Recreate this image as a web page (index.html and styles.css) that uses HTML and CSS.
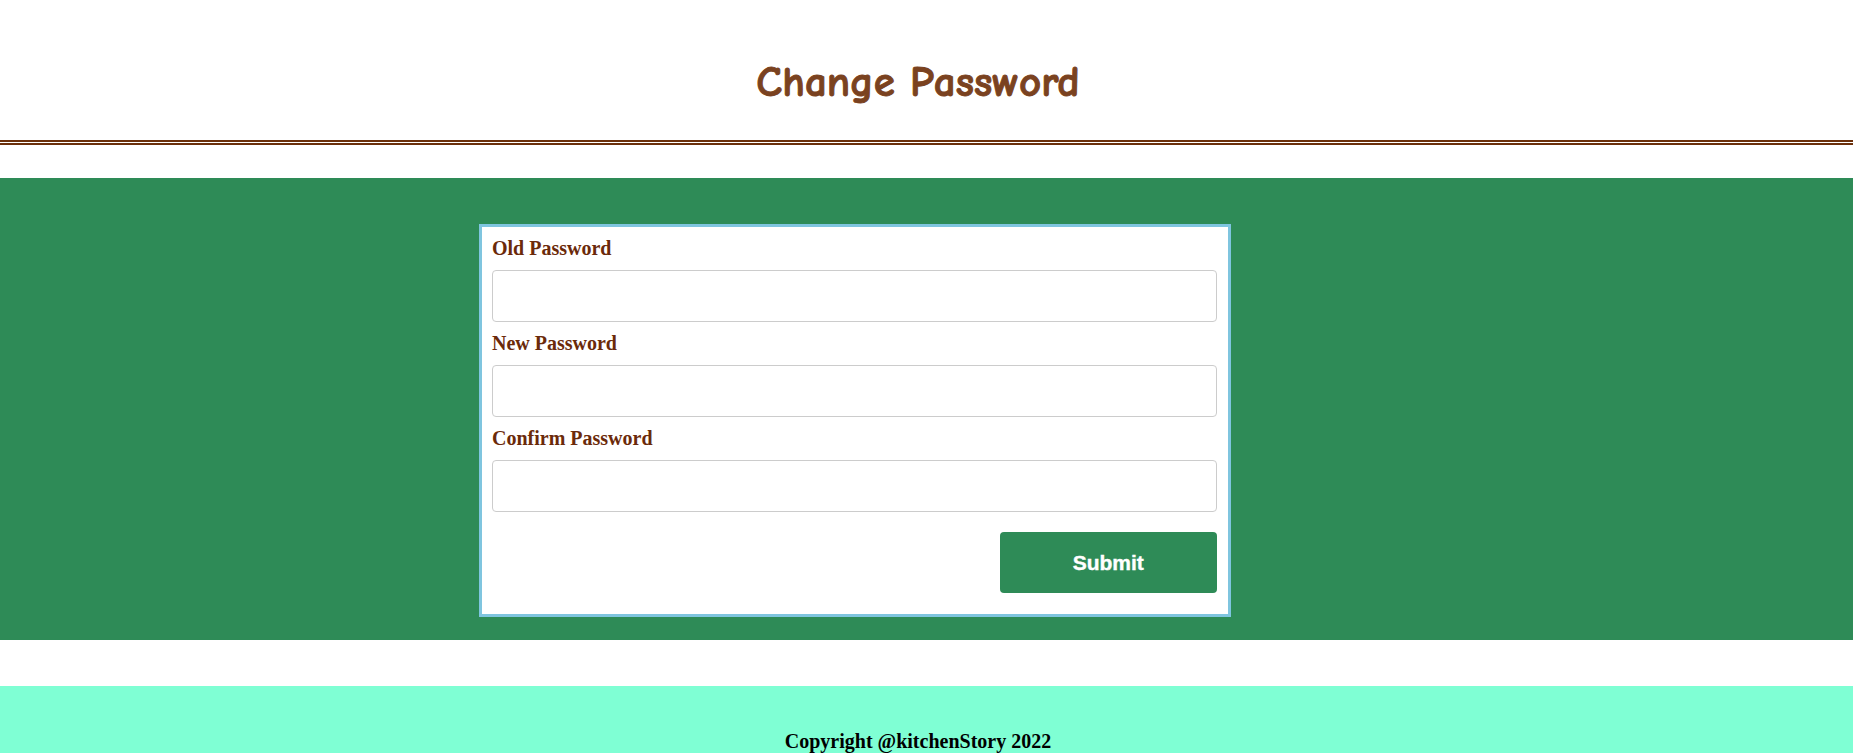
FILE: index.html
```html
<!DOCTYPE html>
<html lang="en">
<head>
<meta charset="utf-8">
<title>Change Password</title>
<link rel="stylesheet" href="styles.css">
</head>
<body>
<header class="page-header">
  <h1 class="page-title">Change Password</h1>
</header>
<main class="band">
  <form class="pw-form">
    <label class="field-label" for="old">Old Password</label>
    <input class="field-input" id="old" type="password">
    <label class="field-label" for="new">New Password</label>
    <input class="field-input" id="new" type="password">
    <label class="field-label" for="confirm">Confirm Password</label>
    <input class="field-input" id="confirm" type="password">
    <div class="actions">
      <button class="submit-btn" type="button">Submit</button>
    </div>
  </form>
</main>
<footer class="page-footer">
  <p class="copyright">Copyright @kitchenStory 2022</p>
</footer>
</body>
</html>
```
FILE: styles.css
```css
html, body {
  margin: 0;
  padding: 0;
  background: #ffffff;
}

.page-header {
  height: 140px;
  border-bottom: 5px double #6b2f0a;
  padding-right: 17px;
  box-sizing: content-box;
}

.page-title {
  margin: 0;
  padding-top: 55px;
  text-align: center;
  font-family: "Comic Sans MS", "Comic Neue", "DejaVu Sans", sans-serif;
  font-weight: 900;
  font-size: 43px;
  line-height: 54px;
  color: #7a4220;
  -webkit-text-stroke: 0.9px #7a4220;
}

.band {
  margin-top: 33px;
  background: #2e8b57;
  padding: 46px 0 23px 479px;
}

.pw-form {
  width: 752px;
  box-sizing: border-box;
  border: 3px solid #7fc5df;
  background: #ffffff;
  padding: 10px 11px 21px 10px;
  display: flex;
  flex-direction: column;
}

.field-label {
  display: block;
  font-family: "Liberation Serif", "Times New Roman", serif;
  font-weight: bold;
  font-size: 20px;
  line-height: 23px;
  color: #6b2a0a;
  margin-bottom: 10px;
}

.field-input {
  display: block;
  width: 100%;
  height: 52px;
  box-sizing: border-box;
  border: 1px solid #cccccc;
  border-radius: 4px;
  margin: 0 0 10px 0;
  padding: 6px 12px;
  background: #ffffff;
  font-size: 16px;
}

.actions {
  display: flex;
  justify-content: flex-end;
  margin-top: 10px;
}

.submit-btn {
  width: 30%;
  height: 61px;
  border: none;
  border-radius: 4px;
  background: #2e8b57;
  color: #ffffff;
  font-family: "Liberation Sans", Arial, sans-serif;
  font-weight: bold;
  font-size: 21px;
  -webkit-text-stroke: 0.4px #ffffff;
  cursor: pointer;
}

.page-footer {
  margin-top: 46px;
  background: #7fffd4;
  padding: 44px 17px 40px 0;
}

.copyright {
  margin: 0;
  text-align: center;
  font-family: "Liberation Serif", "Times New Roman", serif;
  font-weight: bold;
  font-size: 20px;
  line-height: 23px;
  color: #000000;
}
```
